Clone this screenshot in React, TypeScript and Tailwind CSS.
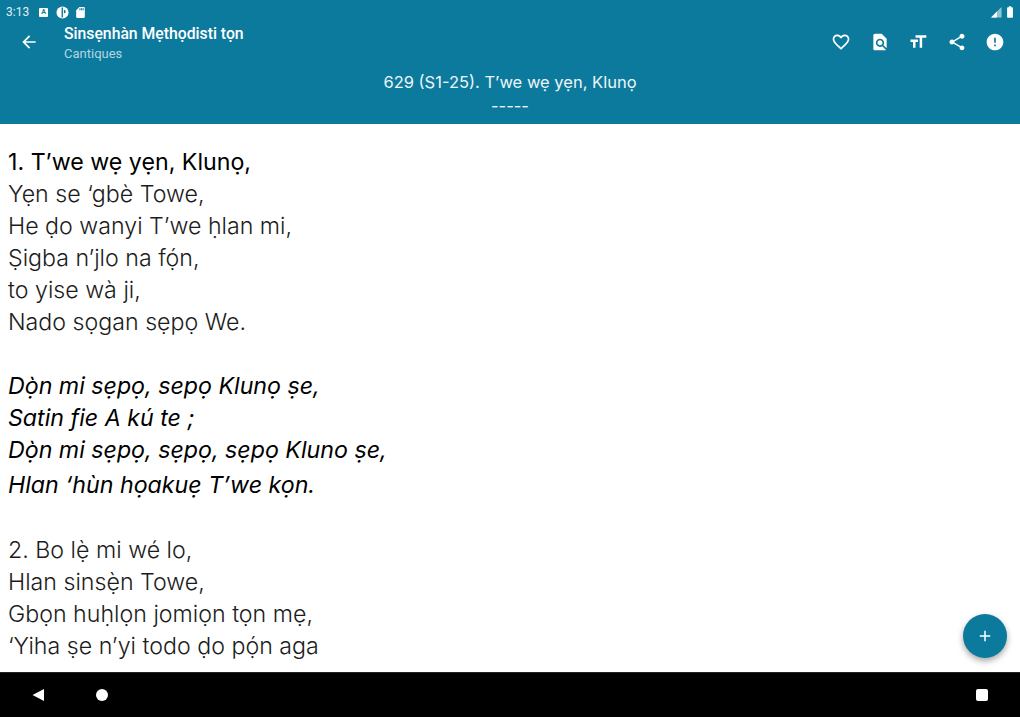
import { MdArrowBack, MdFavoriteBorder, MdFindInPage, MdFormatSize, MdShare, MdError, MdSdCard, MdBatteryFull, MdAdd } from "react-icons/md";

const verses = [
  { bold: true, italic: false, lines: ["1. T’we wẹ yẹn, Klunọ,", "Yẹn se ‘gbè Towe,", "He ḍo wanyi T’we ḥlan mi,", "Ṣigba n’jlo na fọ́n,", "to yise wà ji,", "Nado sọgan sẹpọ We."] },
  { bold: false, italic: true, lines: ["Dọ̀n mi sẹpọ, sepọ Klunọ ṣe,", "Satin fie A kú te ;", "Dọ̀n mi sẹpọ, sẹpọ, sẹpọ Kluno ṣe,", "Hlan ‘hùn họakuẹ T’we kọn."] },
  { bold: false, italic: false, lines: ["2. Bo lẹ̀ mi wé lo,", "Hlan sinsẹ̀n Towe,", "Gbọn huḥlọn jomiọn tọn mẹ,", "‘Yiha ṣe n’yi todo ḍo pọ́n aga"] },
];

function StatusBar() {
  return (
    <div className="flex h-6 items-center justify-between pl-[6px] pr-[3px] text-white">
      <div className="flex items-center">
        <span className="w-[33px] font-['Roboto',sans-serif] text-[12px] leading-none text-[#e3eef3]">3:13</span>
        <span className="flex h-[9px] w-[9px] items-center justify-center rounded-[1px] bg-white font-['Roboto',sans-serif] text-[7px] font-bold leading-none text-[#0c7a9d]">A</span>
        <svg viewBox="0 0 14 14" className="ml-[8px] h-[13px] w-[13px]">
          <circle cx="7" cy="7" r="6.5" fill="#fff" />
          <path d="M6 1.5h1.5v11H6zM8.5 4a2 2 0 0 1 2 2 2 2 0 0 1-2 2z" fill="#0c7a9d" />
        </svg>
        <MdSdCard className="ml-[5px] h-[13px] w-[13px] text-white" />
      </div>
      <div className="flex items-center gap-[1px]">
        <svg viewBox="0 0 12 12" className="h-[11px] w-[11px]">
          <path d="M0 11.5 11.5 0v11.5z" fill="#fff" fillOpacity="0.55" />
          <path d="M6.5 11.5V5l-6.500 6.500z" fill="#fff" />
        </svg>
        <MdBatteryFull className="h-[14px] w-[14px] text-white" />
      </div>
    </div>
  );
}

function Header() {
  return (
    <header className="h-[124px] shrink-0 bg-[#0c7a9d] text-white">
      <StatusBar />
      <div className="flex h-[36px] items-center pl-[19px] pr-[15px]">
        <MdArrowBack size={20} />
        <div className="ml-[25px] flex-1 pt-[3px] font-['Roboto',sans-serif]">
          <p className="text-[15.75px] font-medium leading-[20px]">Sinsẹnhàn Mẹthọdisti tọn</p>
          <p className="text-[13px] leading-[19px] text-[#b4d6e2]">Cantiques</p>
        </div>
        <div className="flex items-center gap-[18.500px]">
          <MdFavoriteBorder size={20} />
          <MdFindInPage size={20} />
          <MdFormatSize size={20} />
          <MdShare size={20} />
          <MdError size={20} />
        </div>
      </div>
      <div className="mt-[10px] text-center font-['Inter',sans-serif] text-[16.5px] leading-[24px] text-[#eef5f8]">
        <p>629 (S1-25). T’we wẹ yẹn, Klunọ</p>
        <p>-----</p>
      </div>
    </header>
  );
}

function lineClass(heading: boolean, tallLine: boolean) {
  if (heading) return "font-normal text-black";
  if (tallLine) return "pb-[3px]";
  return "";
}

export default function App() {
  return (
    <div className="relative flex h-[717px] w-[1020px] flex-col overflow-hidden bg-white">
      <Header />
      <main className="flex min-h-0 flex-1 flex-col gap-8 overflow-hidden pl-2 pt-[22px] font-['Inter',sans-serif] text-[23.2px] leading-8 text-[#1c1c1c]">
        {verses.map((verse, i) => (
          <div key={i} className={verse.italic ? "pb-[1px] italic text-black" : "font-light"}>
            {verse.lines.map((line, j) => (
              <p key={j} className={lineClass(verse.bold && j === 0, verse.italic && j === 2)}>
                {line}
              </p>
            ))}
          </div>
        ))}
      </main>
      <button className="absolute left-[963px] top-[614px] flex h-11 w-11 items-center justify-center rounded-full bg-[#0c7a9d] text-white shadow-[0_3px_6px_rgba(0,0,0,0.35)]">
        <MdAdd size={18} />
      </button>
      <nav className="flex h-[45px] shrink-0 items-center justify-between border-t border-t-[#222] bg-black pl-[31px] pr-[32px]">
        <svg viewBox="0 0 14 14" className="h-[14px] w-[14px]"><path d="M13 1v12L1.500 7z" fill="#fff" /></svg>
        <span className="absolute left-[96px] h-3 w-3 rounded-full bg-white" />
        <span className="h-3 w-3 rounded-[2px] bg-white" />
      </nav>
    </div>
  );
}
